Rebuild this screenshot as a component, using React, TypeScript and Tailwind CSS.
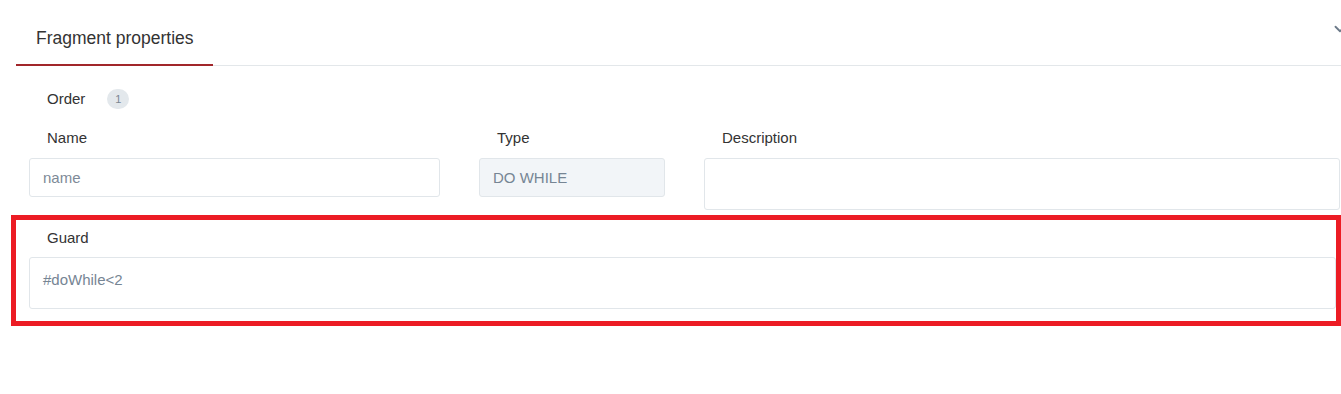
import { ChevronDown } from "lucide-react";

const labelClass = "pl-[18px] text-[15px] leading-[22px] text-[#333333]";
const fieldClass =
  "w-full rounded-[3px] border border-[#e1e6ea] px-[13px] text-[15px] text-[#768594] placeholder:text-[#7e8a97] outline-none";

export default function App() {
  return (
    <div
      className="relative h-[394px] w-[1341px] overflow-hidden bg-white"
      style={{ fontFamily: '"Liberation Sans", Arial, sans-serif' }}
    >
      {/* Collapse chevron, cut off at the right edge */}
      <ChevronDown
        className="absolute left-[1331px] top-[20px] text-[#6c7a89]"
        size={18}
        strokeWidth={2.4}
      />

      {/* Tab bar */}
      <div className="ml-4 flex h-[66px] border-b border-[#e3e7ea]">
        <div className="-mb-px flex w-[197px] items-center whitespace-nowrap border-b-2 border-[#a1262a] px-5 pt-3 text-[17.5px] text-[#333333]">
          Fragment properties
        </div>
      </div>

      <div className="pl-[29px] pr-px">
        {/* Order */}
        <div className="mt-[22px] flex items-center">
          <span className={labelClass}>Order</span>
          <span className="ml-[22px] flex h-5 w-[22px] items-center justify-center rounded-full bg-[#e3e8ec] text-[11px] text-[#7a8692]">
            1
          </span>
        </div>

        {/* Name / Type / Description */}
        <div className="mt-[17px] grid grid-cols-[411px_186px_1fr] gap-x-[39px]">
          <label className={labelClass}>Name</label>
          <label className={labelClass}>Type</label>
          <label className={labelClass}>Description</label>

          <div className="mt-[9px]">
            <input className={`${fieldClass} h-[39px] bg-white`} placeholder="name" />
          </div>
          <div className="mt-[9px]">
            <input
              className={`${fieldClass} h-[39px] bg-[#f2f5f8]`}
              value="DO WHILE"
              disabled
              readOnly
            />
          </div>
          <div className="mt-[9px]">
            <textarea className={`${fieldClass} block h-[52px] resize-none bg-white py-3`} />
          </div>
        </div>
      </div>

      {/* Guard, highlighted */}
      <div className="ml-[11px] mt-[5px] border-[5px] border-[#ec1c24] pb-3 pl-[13px] pt-[7px]">
        <label className={`${labelClass} block`}>Guard</label>
        <textarea
          className={`${fieldClass} mt-2 block h-[52px] resize-none bg-white pt-[11px]`}
          defaultValue="#doWhile<2"
        />
      </div>
    </div>
  );
}
